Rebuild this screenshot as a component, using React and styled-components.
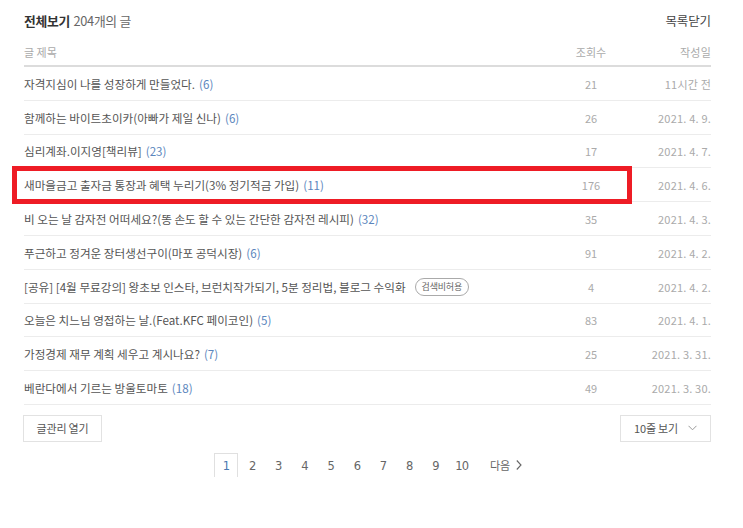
import React from "react";
import styled, { createGlobalStyle } from "styled-components";

const Global = createGlobalStyle`
  html, body { margin: 0; padding: 0; background: #fff; }
  body { font-family: "Noto Sans CJK KR", "Noto Sans", sans-serif; }
  * { box-sizing: border-box; }
`;

const Page = styled.div`
  width: 743px;
  height: 528px;
  padding: 0 32px 0 24px;
`;

const TopBar = styled.div`
  display: flex;
  justify-content: space-between;
  align-items: center;
  height: 40px;
  padding-top: 1px;
`;

const Title = styled.div`
  font-size: 12.8px;
  color: #666;
  letter-spacing: -0.3px;
  b { color: #333; font-weight: 700; margin-right: 1px; }
`;

const CloseLink = styled.span`
  font-size: 12.5px;
  color: #444;
  letter-spacing: -0.1px;
`;

const HeadRow = styled.div`
  display: flex;
  align-items: center;
  height: 27px;
  border-bottom: 2px solid #dcdcdc;
  font-size: 11px;
  color: #aaa;
  padding-bottom: 2px;
`;

const Row = styled.div`
  position: relative;
  display: flex;
  align-items: center;
  height: 33.8px;
  border-bottom: 1px solid #ececec;
  font-size: 11px;
  padding-top: 1px;
`;

const TitleCell = styled.div`
  flex: 1;
  color: #555;
  white-space: nowrap;
  display: flex;
  align-items: center;
  font-size: 11.6px;
`;

const HeadTitle = styled(TitleCell)`
  color: #aaa;
  font-size: 11px;
`;

const Count = styled.span`
  color: #5b86bd;
  margin-left: 4px;
`;

const ViewsCell = styled.div`
  width: 60px;
  text-align: center;
  color: #aaa;
  margin-right: 4px;
`;

const DateCell = styled.div`
  width: 86px;
  text-align: right;
  color: #aaa;
  letter-spacing: 0.2px;
`;

const Badge = styled.span`
  display: inline-flex;
  align-items: center;
  height: 18px;
  padding: 0 6px;
  margin-left: 9px;
  border: 1px solid #aaa;
  border-radius: 9px;
  font-size: 9px;
  color: #666;
  letter-spacing: -0.2px;
`;

const Highlight = styled.div`
  position: absolute;
  left: -12px;
  top: -2px;
  width: 620px;
  height: 38px;
  border: 5px solid #ee1c25;
  pointer-events: none;
`;

const Controls = styled.div`
  display: flex;
  justify-content: space-between;
  margin-top: 10px;
`;

const Button = styled.div`
  display: flex;
  align-items: center;
  justify-content: center;
  gap: 10px;
  height: 27px;
  width: ${(p) => p.$w}px;
  border: 1px solid #e2e2e2;
  font-size: 11px;
  color: #555;
  letter-spacing: -0.2px;
  margin-left: ${(p) => (p.$left ? "-1px" : "0")};
`;

const Pager = styled.div`
  display: flex;
  align-items: center;
  margin-top: 11px;
  padding-left: 190px;
`;

const PageNum = styled.span`
  display: flex;
  align-items: center;
  justify-content: center;
  width: 24px;
  height: 24px;
  margin-right: 2.2px;
  font-family: "DejaVu Sans", sans-serif;
  font-size: 11.5px;
  letter-spacing: -0.8px;
  color: ${(p) => (p.$active ? "#4a78b0" : "#666")};
  border: 1px solid ${(p) => (p.$active ? "#e0e0e0" : "transparent")};
  border-bottom: none;
  padding-top: 1px;
`;

const NextLink = styled.span`
  display: flex;
  align-items: center;
  gap: 6px;
  margin-left: 14px;
  font-size: 11px;
  color: #666;
`;

const rows = [
  { t: "자격지심이 나를 성장하게 만들었다.", c: 6, v: 21, d: "11시간 전" },
  { t: "함께하는 바이트초이카(아빠가 제일 신나)", c: 6, v: 26, d: "2021. 4. 9." },
  { t: "심리계좌.이지영[책리뷰]", c: 23, v: 17, d: "2021. 4. 7." },
  { t: "새마을금고 출자금 통장과 혜택 누리기(3% 정기적금 가입)", c: 11, v: 176, d: "2021. 4. 6.", hl: true },
  { t: "비 오는 날 감자전 어떠세요?(똥 손도 할 수 있는 간단한 감자전 레시피)", c: 32, v: 35, d: "2021. 4. 3." },
  { t: "푸근하고 정겨운 장터생선구이(마포 공덕시장)", c: 6, v: 91, d: "2021. 4. 2." },
  { t: "[공유] [4월 무료강의] 왕초보 인스타, 브런치작가되기, 5분 정리법, 블로그 수익화", badge: "검색비허용", v: 4, d: "2021. 4. 2." },
  { t: "오늘은 치느님 영접하는 날.(Feat.KFC 페이코인)", c: 5, v: 83, d: "2021. 4. 1." },
  { t: "가정경제 재무 계획 세우고 계시나요?", c: 7, v: 25, d: "2021. 3. 31." },
  { t: "베란다에서 기르는 방울토마토", c: 18, v: 49, d: "2021. 3. 30." },
];

const Chevron = ({ dir = "down" }) =>
  dir === "down" ? (
    <svg width="9" height="6" viewBox="0 0 9 6">
      <path d="M0.5 0.8 L4.5 4.8 L8.5 0.8" fill="none" stroke="#999" strokeWidth="1" />
    </svg>
  ) : (
    <svg width="6" height="10" viewBox="0 0 6 10">
      <path d="M0.8 0.5 L5 5 L0.8 9.5" fill="none" stroke="#666" strokeWidth="1.1" />
    </svg>
  );

export default function App() {
  return (
    <Page>
      <Global />
      <TopBar>
        <Title>
          <b>전체보기</b> 204개의 글
        </Title>
        <CloseLink>목록닫기</CloseLink>
      </TopBar>
      <HeadRow>
        <HeadTitle>글 제목</HeadTitle>
        <ViewsCell>조회수</ViewsCell>
        <DateCell>작성일</DateCell>
      </HeadRow>
      {rows.map((r, i) => (
        <Row key={i}>
          <TitleCell>
            {r.t}
            {r.c != null && <Count>({r.c})</Count>}
            {r.badge && <Badge>{r.badge}</Badge>}
          </TitleCell>
          <ViewsCell>{r.v}</ViewsCell>
          <DateCell>{r.d}</DateCell>
          {r.hl && <Highlight />}
        </Row>
      ))}
      <Controls>
        <Button $w={79} $left>글관리 열기</Button>
        <Button $w={91}>
          10줄 보기 <Chevron />
        </Button>
      </Controls>
      <Pager>
        {[1, 2, 3, 4, 5, 6, 7, 8, 9, 10].map((n) => (
          <PageNum key={n} $active={n === 1}>
            {n}
          </PageNum>
        ))}
        <NextLink>
          다음 <Chevron dir="right" />
        </NextLink>
      </Pager>
    </Page>
  );
}
